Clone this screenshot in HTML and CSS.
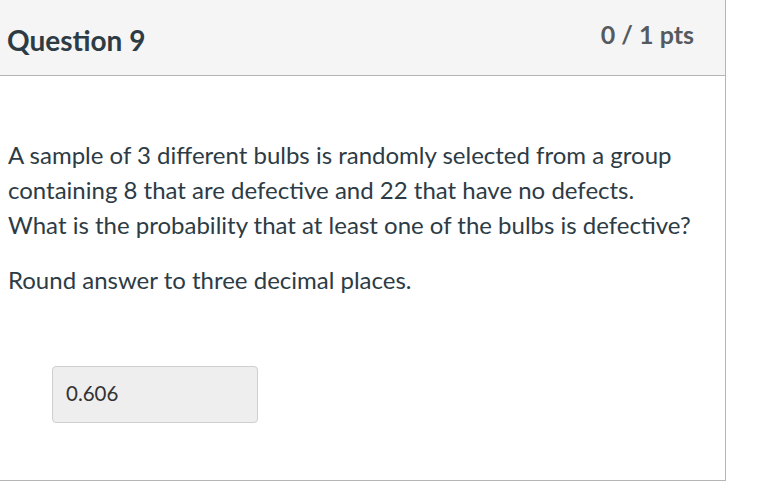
FILE: index.html
```html
<!DOCTYPE html>
<html>
<head>
<meta charset="utf-8">
<link rel="stylesheet" href="styles.css">
</head>
<body>
<div class="card">
  <div class="header">
    <div class="title">Question 9</div>
    <div class="pts">0 / 1 pts</div>
  </div>
  <div class="content">
    <p class="para">A sample of 3 different bulbs is randomly selected from a group<br>containing 8 that are defective and 22 that have no defects.<br>What is the probability that at least one of the bulbs is defective?</p>
    <p class="para">Round answer to three decimal places.</p>
    <div class="answer">0.606</div>
  </div>
</div>
</body>
</html>
```
FILE: styles.css
```css
html, body {
  margin: 0;
  padding: 0;
  background: #ffffff;
}
body {
  font-family: Lato, "Open Sans", sans-serif;
  color: #2d3b45;
}
.card {
  width: 725px;
  border-right: 1px solid #b5b5b5;
  border-bottom: 1px solid #b5b5b5;
}
.header {
  height: 75px;
  background: #f5f5f5;
  border-bottom: 1px solid #b5b5b5;
  display: flex;
  justify-content: space-between;
  align-items: center;
  padding: 0 31px 0 7px;
}
.title {
  font-size: 28px;
  font-weight: 700;
  color: #2d3b45;
  padding-top: 4px;
}
.pts {
  font-size: 25px;
  font-weight: 700;
  color: #555a5e;
  padding-bottom: 8px;
}
.content {
  padding: 61px 8px 57px 8px;
}
.para {
  margin: 0 0 20px 0;
  font-size: 24px;
  line-height: 35px;
}
.answer {
  margin: 69px 0 0 44px;
  width: 204px;
  height: 55px;
  box-sizing: content-box;
  background: #eeeeee;
  border: 1px solid #cfcfcf;
  border-radius: 4px;
  font-size: 20.5px;
  line-height: 53px;
  padding: 0;
  text-indent: 13px;
  color: #333333;
}
```
